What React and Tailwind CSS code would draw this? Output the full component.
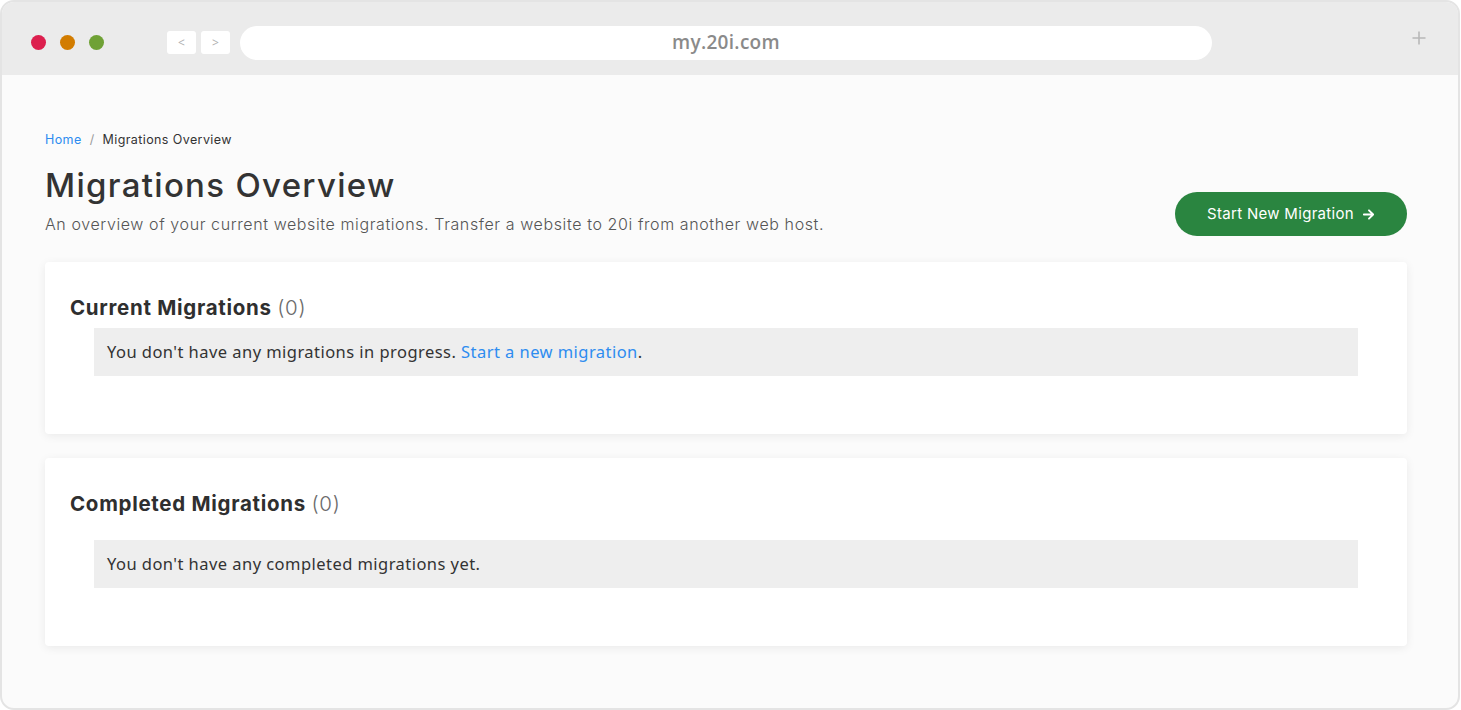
import React from "react";

function Frame({ children }) {
  return (
    <div className="w-[1461px] h-[710px] bg-white">
      <div className="w-[1460px] h-[710px] rounded-[14px] border-2 border-[#e4e4e4] overflow-hidden flex flex-col bg-[#fbfbfb]">
        {children}
      </div>
    </div>
  );
}

function TopBar() {
  return (
    <div className="h-[73px] shrink-0 bg-[#ebebeb] flex items-center pt-[8px] pl-[29px] pr-[32px]" style={{ fontFamily: '"Open Sans", sans-serif' }}>
      <div className="flex items-center gap-[14px]">
        <span className="w-[15px] h-[15px] rounded-full bg-[#dc1f4e]" />
        <span className="w-[15px] h-[15px] rounded-full bg-[#d27c00]" />
        <span className="w-[15px] h-[15px] rounded-full bg-[#6fa135]" />
      </div>
      <div className="flex items-center gap-[5px] ml-[63px]">
        <div className="w-[29px] h-[23px] bg-white rounded-[3px] flex items-center justify-center text-[#b0b0b0] text-[12px]">&lt;</div>
        <div className="w-[29px] h-[23px] bg-white rounded-[3px] flex items-center justify-center text-[#b0b0b0] text-[12px]">&gt;</div>
      </div>
      <div className="ml-[10px] w-[972px] h-[34px] bg-white rounded-full flex items-center justify-center text-[19px] tracking-[0.3px] font-semibold text-[#8a8a8a]">
        my.20i.com
      </div>
      <div className="flex-1" />
      <svg width="14" height="14" viewBox="0 0 14 14" className="-mt-[10px]" stroke="#b8b8b8" strokeWidth="1.6">
        <path d="M7 0.5v13M0.5 7h13" />
      </svg>
    </div>
  );
}

function Card({ title, count, children, gap }) {
  return (
    <div className="bg-white rounded-[4px] shadow-[0_2px_10px_rgba(0,0,0,0.07)] pt-[32px] pb-[58px] pl-[25px] pr-[49px]">
      <h2 className="text-[20.5px] leading-[28px] font-bold text-[#2f2f2f] tracking-[0.7px]" style={{ fontFamily: 'Inter, sans-serif' }}>
        {title} <span className="font-light text-[#6b6b6b]">({count})</span>
      </h2>
      <div className={`ml-[24px] h-[48px] bg-[#eeeeee] flex items-center px-[13px] text-[16.5px] tracking-[0.45px] text-[#333] ${gap}`} style={{ fontFamily: '"Noto Sans", sans-serif' }}>
        {children}
      </div>
    </div>
  );
}

export default function App() {
  return (
    <Frame>
      <TopBar />
      <div className="flex-1 pl-[43px] pr-[51px] pt-[57px]" style={{ fontFamily: 'Inter, sans-serif' }}>
        <div className="text-[12.5px] leading-[16px] tracking-[0.4px] flex items-center gap-[8px]">
          <span className="text-[#2d8cf0]">Home</span>
          <span className="text-[#999]">/</span>
          <span className="text-[#333]">Migrations Overview</span>
        </div>
        <div className="flex items-end justify-between mt-[17px]">
          <div>
            <h1 className="text-[33px] leading-[40px] font-medium text-[#333] tracking-[1.3px]">Migrations Overview</h1>
            <p className="text-[16px] leading-[24px] font-light text-[#555] mt-[7px] tracking-[0.6px]">
              An overview of your current website migrations. Transfer a website to 20i from another web host.
            </p>
          </div>
          <button className="w-[232px] h-[44px] rounded-full bg-[#2a8540] text-white text-[15px] tracking-[0.3px] flex items-center justify-center gap-[8px]">
            Start New Migration
            <svg width="13" height="13" viewBox="0 0 14 14" fill="none" stroke="white" strokeWidth="2" strokeLinecap="round" strokeLinejoin="round">
              <path d="M2 7h10M7.5 2.5 12 7l-4.5 4.5" />
            </svg>
          </button>
        </div>
        <div className="mt-[26px] flex flex-col gap-[24px]">
          <Card title="Current Migrations" count="0" gap="mt-[6px]">
            <span>
              You don't have any migrations in progress.{" "}
              <span className="text-[#2d8cf0]">Start a new migration</span>.
            </span>
          </Card>
          <Card title="Completed Migrations" count="0" gap="mt-[22px]">
            <span>You don't have any completed migrations yet.</span>
          </Card>
        </div>
      </div>
    </Frame>
  );
}
